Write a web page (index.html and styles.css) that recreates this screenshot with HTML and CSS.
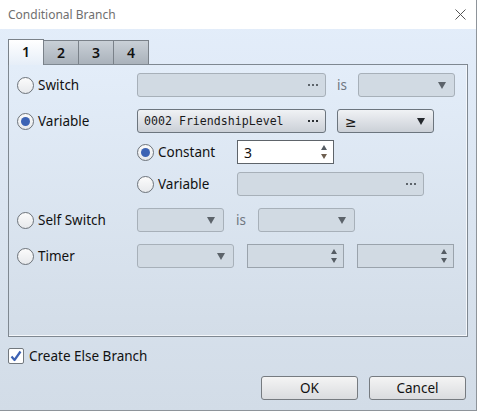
FILE: index.html
```html
<!DOCTYPE html>
<html lang="en">
<head>
  <meta charset="UTF-8" />
  <title>Conditional Branch</title>
  <link rel="stylesheet" href="styles.css">
</head>
<body>
  <div class="window">
    <div class="titlebar">
      <span class="title">Conditional Branch</span>
      <svg class="close" width="11" height="11" viewBox="0 0 11 11">
        <path d="M0.5 0.5 L10.5 10.5 M10.5 0.5 L0.5 10.5" stroke="#555" stroke-width="1" fill="none"/>
      </svg>
    </div>

    <div class="main">
      <div class="tabs">
        <div class="tab active">1</div>
        <div class="tab">2</div>
        <div class="tab">3</div>
        <div class="tab">4</div>
      </div>

      <div class="panel">
        <!-- Switch -->
        <div class="row first">
          <label class="opt"><span class="radio"></span>Switch</label>
          <div class="field off w189"><span class="dots"><i></i><i></i><i></i></span></div>
          <span class="is">is</span>
          <div class="field off combo w97"><span class="arrow"></span></div>
        </div>

        <!-- Variable -->
        <div class="row gap12">
          <label class="opt"><span class="radio checked"></span>Variable</label>
          <div class="field on w189"><span class="mono">0002 FriendshipLevel</span><span class="dots dark"><i></i><i></i><i></i></span></div>
          <div class="field on combo w97 ml11"><span class="sym">≥</span><span class="arrow dark"></span></div>
        </div>

        <div class="row sub gap7">
          <label class="opt small"><span class="radio checked"></span>Constant</label>
          <div class="spin white w97"><span class="val">3</span><span class="spinners"><span class="up"></span><span class="down"></span></span></div>
        </div>

        <div class="row sub gap8">
          <label class="opt small"><span class="radio"></span>Variable</label>
          <div class="field off w187"><span class="dots"><i></i><i></i><i></i></span></div>
        </div>

        <!-- Self Switch -->
        <div class="row gap12">
          <label class="opt"><span class="radio"></span>Self Switch</label>
          <div class="field off combo w87"><span class="arrow"></span></div>
          <span class="is wide">is</span>
          <div class="field off combo w97"><span class="arrow"></span></div>
        </div>

        <!-- Timer -->
        <div class="row gap12">
          <label class="opt"><span class="radio"></span>Timer</label>
          <div class="field off combo w97"><span class="arrow"></span></div>
          <div class="spin off w97 ml13"><span class="spinners"><span class="up"></span><span class="down"></span></span></div>
          <div class="spin off w97 ml13"><span class="spinners"><span class="up"></span><span class="down"></span></span></div>
        </div>
      </div>

      <div class="else">
        <span class="check">
          <svg width="14" height="14" viewBox="0 0 14 14">
            <path d="M2.5 7.5 L5.5 11 L11.5 2.5" stroke="#3d62b3" stroke-width="2.2" fill="none" stroke-linejoin="round"/>
          </svg>
        </span>
        Create Else Branch
      </div>

      <div class="buttons">
        <button class="btn">OK</button>
        <button class="btn">Cancel</button>
      </div>
    </div>
  </div>
</body>
</html>
```

FILE: styles.css
```css
body {
  margin: 0;
  font-family: "Noto Sans", "DejaVu Sans", sans-serif;
  font-size: 13.5px;
  color: #111;
}

.window {
  width: 477px;
  height: 411px;
  box-sizing: border-box;
  border-right: 1px solid #8e949a;
  border-bottom: 1px solid #8e949a;
  display: flex;
  flex-direction: column;
  background: linear-gradient(#e4eefb, #d2dce7);
}

.titlebar {
  height: 29px;
  background: #fff;
  display: flex;
  align-items: center;
  justify-content: space-between;
  padding: 0 10px 0 8px;
  flex-shrink: 0;
}

.title {
  font-size: 12px;
  color: #6f6f6f;
  margin-top: -1px;
}

.close {
  margin-top: -1px;
}

.main {
  flex: 1;
  display: flex;
  flex-direction: column;
}

/* tabs */
.tabs {
  height: 35px;
  box-sizing: border-box;
  display: flex;
  align-items: flex-end;
  padding-left: 8px;
}

.tab {
  width: 35px;
  height: 24px;
  box-sizing: border-box;
  border: 1px solid #7a8189;
  border-bottom: none;
  border-left: none;
  background: linear-gradient(#c9d0d7, #aab2bb);
  display: flex;
  align-items: center;
  justify-content: center;
  font-weight: 600;
  font-size: 14px;
  color: #111;
}

.tab.active {
  width: 36px;
  height: 26px;
  border-left: 1px solid #7a8189;
  background: linear-gradient(#ffffff, #e6eef8);
  margin-bottom: -1px;
  position: relative;
  z-index: 1;
  padding-bottom: 2px;
}

/* panel */
.panel {
  margin: 0 8px;
  height: 273px;
  box-sizing: border-box;
  border: 1px solid #7f8891;
  box-shadow: inset -1px -1px 0 #f4f7fb;
  background: linear-gradient(#e3edf9, #d3dde8);
  padding: 8px 8px 0 8px;
}

.row {
  height: 24px;
  display: flex;
  align-items: center;
}

.row.sub {
  padding-left: 120px;
}

.gap12 { margin-top: 12px; }
.gap8 { margin-top: 8px; }
.gap7 { margin-top: 7px; }

.opt {
  width: 120px;
  flex-shrink: 0;
  display: flex;
  align-items: center;
  gap: 4px;
  color: #111;
}

.opt.small {
  width: 100px;
}

.radio {
  width: 17px;
  height: 17px;
  box-sizing: border-box;
  border-radius: 50%;
  border: 1px solid #6d737a;
  background: linear-gradient(#fbfbfb, #e7e9ec);
  display: flex;
  align-items: center;
  justify-content: center;
}

.radio.checked::after {
  content: "";
  width: 9px;
  height: 9px;
  border-radius: 50%;
  background: #3d63b4;
}

/* inputs */
.field, .spin {
  height: 24px;
  box-sizing: border-box;
  border: 1px solid #a7b0b9;
  border-radius: 3px;
  display: flex;
  align-items: center;
  justify-content: flex-end;
  padding: 0 7px 0 6px;
  flex-shrink: 0;
}

.field.off, .spin.off {
  background: #d1dae3;
}

.field.on {
  border-color: #6c757e;
  background: linear-gradient(#f0f2f5, #cbd0d7);
  justify-content: space-between;
}

.w189 { width: 189px; }
.w187 { width: 187px; }
.w97 { width: 97px; }
.w87 { width: 87px; }
.ml11 { margin-left: 11px; }
.ml13 { margin-left: 13px; }

.mono {
  font-family: "DejaVu Sans Mono", monospace;
  font-size: 11.6px;
  color: #1a1a1a;
}

.sym {
  font-size: 14px;
  color: #1a1a1a;
  margin-left: 1px;
}

.dots {
  display: flex;
  gap: 2px;
}

.dots i {
  width: 2px;
  height: 2px;
  background: #5d646b;
}

.dots.dark i {
  background: #2b2f33;
}

.arrow {
  width: 0;
  height: 0;
  border-left: 4px solid transparent;
  border-right: 4px solid transparent;
  border-top: 7px solid #5c636a;
  margin-right: 1px;
}

.arrow.dark {
  border-top-color: #24282c;
}

.is {
  width: 32px;
  padding-left: 11px;
  box-sizing: border-box;
  color: #6f7780;
  flex-shrink: 0;
}

.is.wide {
  width: 34px;
  padding-left: 12px;
}

.spin.white {
  background: #fff;
  border-color: #5e646a;
  border-radius: 0;
  justify-content: space-between;
  padding-left: 6px;
  padding-right: 6px;
}

.spin.off {
  border-color: #9aa3ac;
  border-radius: 0;
  padding-right: 6px;
}

.val {
  font-size: 14px;
  color: #111;
}

.spinners {
  display: flex;
  flex-direction: column;
  gap: 4px;
}

.spinners .up {
  width: 0;
  height: 0;
  border-left: 3px solid transparent;
  border-right: 3px solid transparent;
  border-bottom: 5px solid #555c63;
}

.spinners .down {
  width: 0;
  height: 0;
  border-left: 3px solid transparent;
  border-right: 3px solid transparent;
  border-top: 5px solid #555c63;
}

.spin.white .down {
  border-top-color: #6e5f50;
}

/* bottom */
.else {
  margin: 11px 0 0 8px;
  height: 16px;
  display: flex;
  align-items: center;
  gap: 5px;
}

.check {
  width: 16px;
  height: 16px;
  box-sizing: border-box;
  border: 1px solid #72787e;
  border-radius: 2px;
  background: #fff;
  display: flex;
  align-items: center;
  justify-content: center;
}

.buttons {
  margin-top: 12px;
  display: flex;
  justify-content: flex-end;
  gap: 11px;
  padding-right: 10px;
}

.btn {
  width: 97px;
  height: 24px;
  border: 1px solid #767b80;
  border-radius: 3px;
  background: linear-gradient(#f4f4f4, #dadcdf);
  font-family: "Noto Sans", "DejaVu Sans", sans-serif;
  font-size: 13.5px;
  color: #111;
  padding: 0;
}
```
